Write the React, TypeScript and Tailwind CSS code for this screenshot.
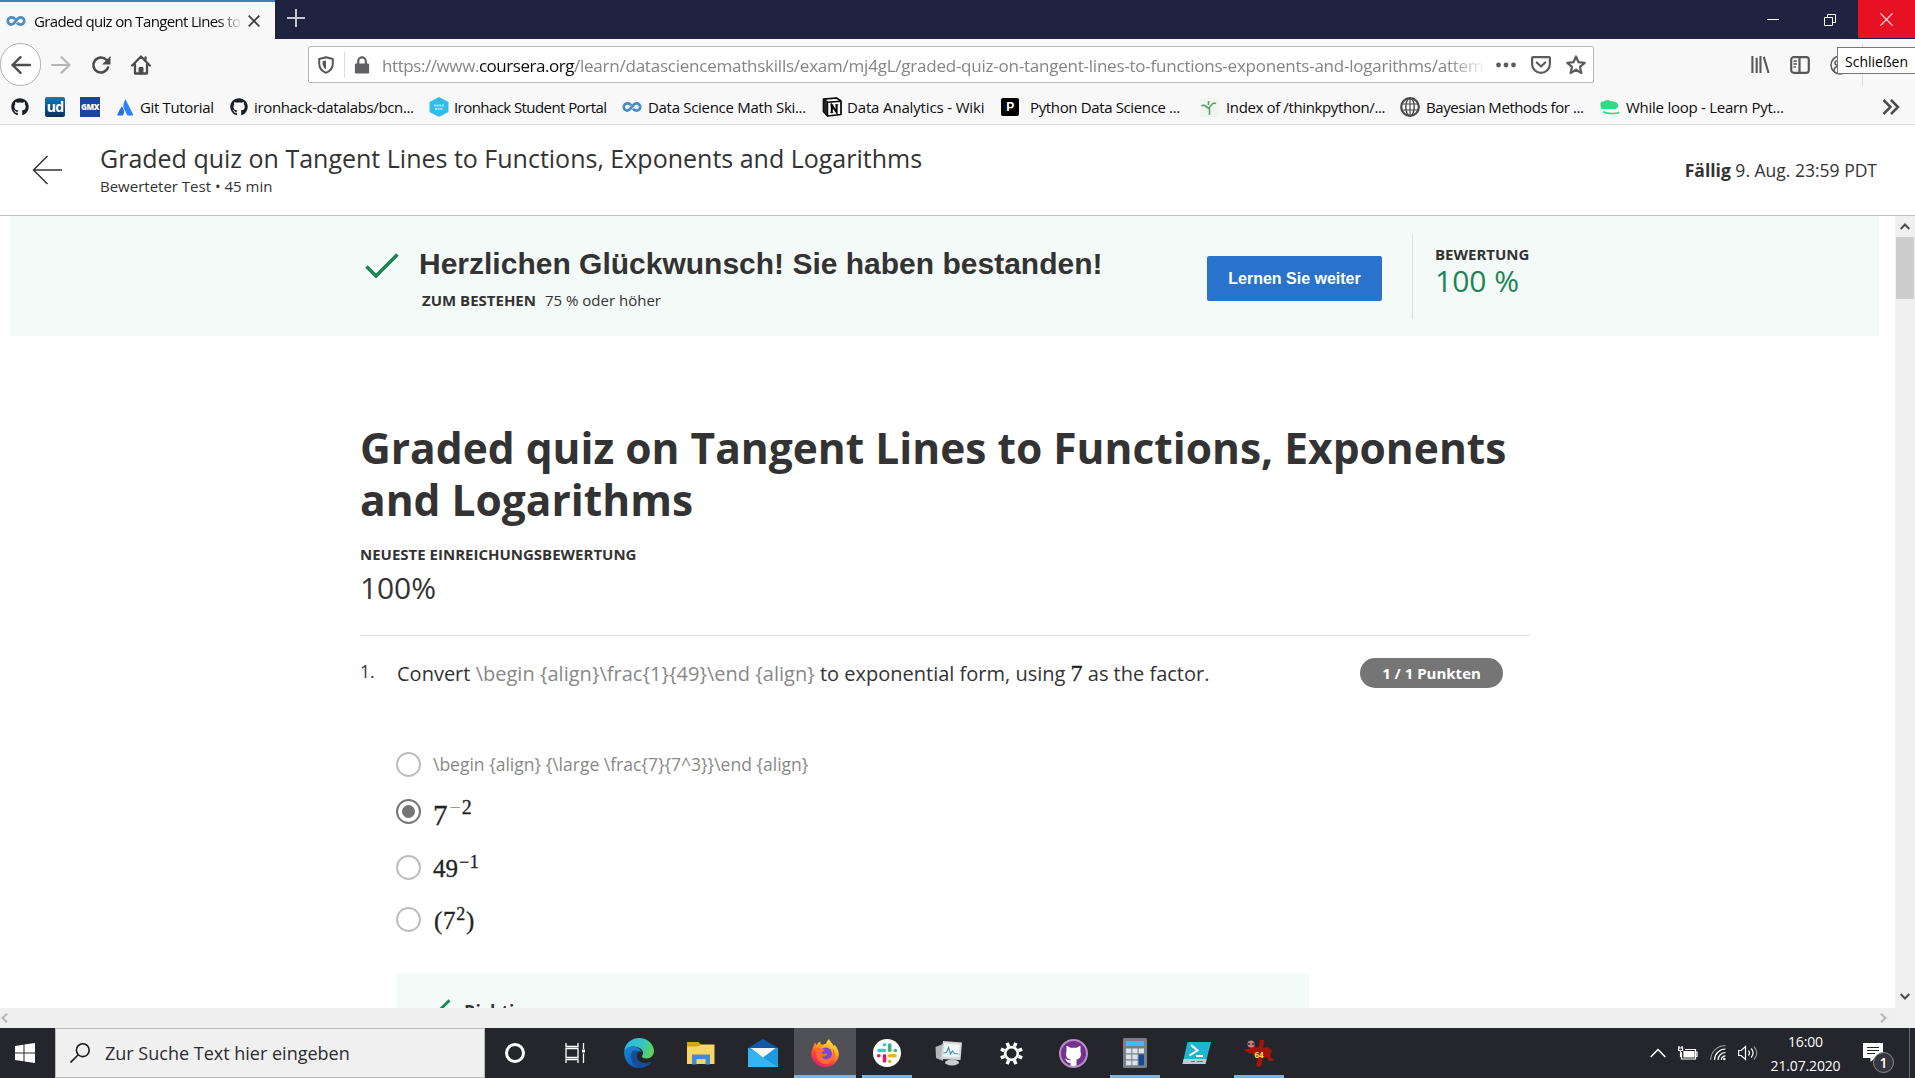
import type { ReactNode } from "react";
import { FaGithub } from "react-icons/fa";

const ui = "font-['Open_Sans','Noto_Sans',sans-serif]";

/* ---------- browser chrome icons ---------- */

function Coursera({ className = "h-[10px] w-[20px]" }: { className?: string }) {
  return (
    <svg viewBox="0 0 20 10" className={className} fill="none" stroke="#4a8bc4" strokeWidth="2.7">
      <path d="M9.200 3.200C8.200 1.800 7 1.400 5.400 1.400a3.600 3.600 0 1 0 0 7.200C9.600 8.600 10 1.400 14.600 1.400a3.600 3.600 0 1 1 0 7.200c-1.600 0-2.800-.6-3.600-1.800" />
    </svg>
  );
}

function Atlassian() {
  return (
    <svg viewBox="0 0 18 18" className="h-[17px] w-[17px]">
      <path d="M5 8C3.5 10 1.5 14 .3 16.8c-.2.5 0 .8.5.8H6c2.500-2.500 1.600-7-1-9.600z" fill="#2b6fe0" />
      <path d="M8.500 1C6.500 4.500 6.200 8 8 11.500l2.800 5.700c.2.300.4.400.7.400h5.200c.5 0 .7-.4.500-.8L9.400 1c-.2-.5-.6-.5-.9 0z" fill="#2684ff" />
    </svg>
  );
}

function Notion() {
  return (
    <svg viewBox="0 0 20 20" className="h-[20px] w-[20px]">
      <path d="M1.500 2.200 14.500 1 19 4v13.500L5.500 19 1.500 14.500z" fill="#fff" stroke="#000" strokeWidth="1.700" strokeLinejoin="round" />
      <path d="M1.500 2.200 5.500 5.200 19 4.200M5.500 5.200V19" fill="none" stroke="#000" strokeWidth="1.500" />
      <path d="M1.500 3 5.500 6v12.500l-4-4.500z" fill="#222" />
      <path d="M9.800 15.500V8.300l4.800 7V7.800" fill="none" stroke="#000" strokeWidth="2" />
      <path d="M8.300 8h3M13.200 7.800h3M8.300 15.700h3" stroke="#000" strokeWidth="1" />
    </svg>
  );
}

function BookmarkGlobe() {
  return (
    <svg viewBox="0 0 20 20" className="h-[20px] w-[20px]" fill="none" stroke="#4a4a4c">
      <circle cx="10" cy="10" r="8.800" strokeWidth="2.200" />
      <ellipse cx="10" cy="10" rx="4.200" ry="8.800" strokeWidth="1.400" />
      <path d="M1 7h18M1 13h18M10 1v18" strokeWidth="1.200" />
    </svg>
  );
}

function Plant() {
  return (
    <span className="flex h-[19px] w-[19px] items-center justify-center bg-[#eef6ee]">
      <svg viewBox="0 0 18 18" className="h-[18px] w-[18px]" fill="none" stroke="#5f9f68" strokeWidth="1.600">
        <path d="M9.500 17V9M9.500 11 4 7M9.500 9 13.500 5M8.500 7V3M4 7 1.500 8M13.500 5l2.500.5" />
      </svg>
    </span>
  );
}

function Snake() {
  return (
    <svg viewBox="0 0 21 17" className="h-[17px] w-[21px]">
      <path d="M.5 4C1.500 1.500 4 3 5 1.500 7 .3 9 .3 10.500 1.800 13 2.500 17 2 18.500 4.500c1.500 3-.5 5.500-3 5.500H3C.5 10 .5 8 .5 4z" fill="#2edc86" />
      <path d="M3 13c5 2 12 2.300 17.500.7" stroke="#2edc86" strokeWidth="1.700" fill="none" />
    </svg>
  );
}

function Hexagon() {
  return (
    <svg viewBox="0 0 20 20" className="h-[20px] w-[20px]">
      <path d="M10 0 19.500 5v10L10 20 .5 15V5z" fill="#33bdea" />
      <path d="M5 8.500h10M6 12h8" stroke="#a9e3f7" strokeWidth="1.800" strokeDasharray="2 .6" />
    </svg>
  );
}

function NavButtons() {
  return (
    <div className="flex h-[43px] w-[308px] shrink-0 items-center text-[#4c4c4e]">
      <div className="flex h-[43px] w-[41px] items-center justify-center rounded-full border border-[#b1b1b3] bg-white">
        <svg viewBox="0 0 20 20" className="h-5 w-5" fill="none" stroke="currentColor" strokeWidth="2.400" strokeLinecap="round" strokeLinejoin="round">
          <path d="M19 10H1.500M9.500 2.200 1.500 10l8 7.800" />
        </svg>
      </div>
      <svg viewBox="0 0 20 20" className="ml-[10px] h-5 w-5 text-[#b5b5b7]" fill="none" stroke="currentColor" strokeWidth="2.200" strokeLinecap="round" strokeLinejoin="round">
        <path d="M1 10h17.500M10.500 2.200l8 7.800-8 7.800" />
      </svg>
      <svg viewBox="0 0 20 20" className="ml-[20px] h-5 w-5" fill="none" stroke="currentColor" strokeWidth="2.500">
        <path d="M17 12.500A7.500 7.500 0 1 1 15.500 5" strokeLinecap="round" />
        <path d="M19.500 1v8.500H11z" fill="currentColor" stroke="none" />
      </svg>
      <svg viewBox="0 0 20 20" className="ml-[20px] h-5 w-5" fill="none" stroke="currentColor" strokeWidth="2.300" strokeLinejoin="round" strokeLinecap="round">
        <path d="M1.200 10.500 10 1.500l8.800 9M4 9.500v9h12v-9" />
        <path d="M8 18.500v-6h4v6z" fill="currentColor" strokeWidth="1" />
        <path d="M14.500 4.500v-2" />
      </svg>
    </div>
  );
}

function UrlBar() {
  return (
    <div className="flex h-[37px] w-[1286px] shrink-0 items-center rounded-[2px] border border-[#b8b8ba] bg-white">
      <svg viewBox="0 0 16 18" className="ml-[9px] h-[18px] w-[16px]" fill="none" stroke="#58585a" strokeWidth="2">
        <path d="M8 1.200 14.800 3v4.500c0 4.500-2.500 7.500-6.800 9.300C3.700 15 1.200 12 1.200 7.500V3z" strokeLinejoin="round" />
        <path d="M8 4.500v9C5.800 12 4.500 10 4.500 7V5.300z" fill="#58585a" stroke="none" />
      </svg>
      <div className="ml-[10px] h-[26px] w-px bg-[#dcdcde]" />
      <svg viewBox="0 0 16 19" className="ml-[9px] h-[18px] w-[16px]">
        <path d="M4 9V5.500a4 4 0 0 1 8 0V9" fill="none" stroke="#606062" strokeWidth="2.300" />
        <rect x=".5" y="8" width="15" height="10.500" rx="1.300" fill="#606062" />
      </svg>
      <div className="ml-[12px] flex w-[1105px] overflow-hidden pt-[2px] text-[17px] leading-6 whitespace-nowrap text-[#858587] [mask-image:linear-gradient(to_right,black_96.5%,transparent)]">
        <span className="tracking-[-0.42px]">https://www.</span>
        <span className="tracking-[-0.47px] text-[#0c0c0d]">coursera.org</span>
        <span className="tracking-[-0.23px]">/learn/datasciencemathskills/exam/mj4gL/graded-quiz-on-tangent-lines-to-functions-exponents-and-logarithms/attem</span>
      </div>
      <svg viewBox="0 0 22 6" className="ml-[8px] h-[6px] w-[22px]" fill="#5c5c5e">
        <circle cx="3.500" cy="3" r="2.400" /><circle cx="11" cy="3" r="2.400" /><circle cx="18.500" cy="3" r="2.400" />
      </svg>
      <svg viewBox="0 0 20 18" className="ml-[14px] h-[18px] w-[20px]" fill="none" stroke="#5c5c5e" strokeWidth="2.200" strokeLinejoin="round" strokeLinecap="round">
        <path d="M2 1.200h16c.6 0 .9.3.9.900V8A8.900 8.900 0 0 1 1.100 8V2.100c0-.6.3-.9.9-.9zM5.800 6.500 10 10.500l4.200-4" />
      </svg>
      <svg viewBox="0 0 20 20" className="ml-[15px] h-[20px] w-[20px]" fill="none" stroke="#5c5c5e" strokeWidth="2.200" strokeLinejoin="round">
        <path d="m10 1.500 2.500 5.700 6.200.6-4.700 4.100 1.400 6.100L10 14.800 4.600 18 6 11.900 1.300 7.800l6.200-.6z" />
      </svg>
    </div>
  );
}

function Bookmark({ icon, label, className }: { icon: ReactNode; label?: string; className: string }) {
  return (
    <div className={"flex shrink-0 items-center " + className}>
      <span className="flex w-[20px] shrink-0 justify-center">{icon}</span>
      {label && <span className="ml-[5px] whitespace-nowrap">{label}</span>}
    </div>
  );
}

function Chrome() {
  return (
    <div className={"relative shrink-0 " + ui}>
      <div className="flex h-[39px] bg-[#202340]">
        <div className="flex w-[275px] items-center border-t-2 border-[#3f82c4] bg-[#f8f8f9] pl-[6px]">
          <Coursera />
          <div className="ml-[8px] w-[209px] overflow-hidden text-[15px] leading-5 tracking-[-0.66px] whitespace-nowrap text-[#0c0c0d] [mask-image:linear-gradient(to_right,black_88%,transparent_100%)]">
            Graded quiz on Tangent Lines to
          </div>
          <svg viewBox="0 0 12 12" className="ml-[5px] h-[12px] w-[12px]" stroke="#3a3a3c" strokeWidth="1.700"><path d="M.7.7l10.600 10.600M11.300.7.7 11.300" /></svg>
        </div>
        <svg viewBox="0 0 18 18" className="mt-[9px] ml-[12px] h-[18px] w-[18px]" stroke="#c6c6ce" strokeWidth="2"><path d="M9 0v18M0 9h18" /></svg>
        <div className="ml-auto flex items-center">
          <svg viewBox="0 0 12 12" className="mr-[45px] h-3 w-3" stroke="#fff"><path d="M0 5.500h12" /></svg>
          <svg viewBox="0 0 12 12" className="mr-[22px] h-3 w-3" fill="none" stroke="#fff"><path d="M.5 3.500h8v8h-8zM3.500 3.500v-3h8v8h-3" /></svg>
          <div className="flex h-[38px] w-[57px] items-center justify-center self-start bg-[#e81123]">
            <svg viewBox="0 0 14 14" className="h-[13px] w-[13px]" stroke="#fff" strokeWidth="1.200"><path d="M.5.5l13 13M13.500.5l-13 13" /></svg>
          </div>
        </div>
      </div>
      <div className="h-[86px] border-b border-[#d7d7da] bg-[#f8f8f9]">
        <div className="flex h-[51px] items-center">
          <NavButtons />
          <UrlBar />
          <svg viewBox="0 0 20 20" className="ml-[156px] h-[19px] w-[20px]" stroke="#58585a" strokeWidth="2.200"><path d="M2 1v18M6.500 3v16M10.500 1v18M14 2l5 17" /></svg>
          <svg viewBox="0 0 20 18" className="ml-[20px] h-[18px] w-[20px]" fill="none" stroke="#58585a" strokeWidth="2.200">
            <rect x="1.200" y="1.200" width="17.600" height="15.600" rx="2.500" /><path d="M9.500 1v16" /><path d="M3.500 5H7M3.500 8H7M3.500 11H6" strokeWidth="1.300" />
          </svg>
          <svg viewBox="0 0 20 20" className="ml-[20px] h-[20px] w-[20px]" fill="none" stroke="#58585a" strokeWidth="1.500"><circle cx="10" cy="10" r="9" /><circle cx="7" cy="8" r="2" /><path d="M4 16c0-5 6-6 8-3" /></svg>
          <div className="ml-[12px] h-[42px] w-px bg-[#dddde0]" />
        </div>
        <div className="flex h-[34px] items-center pl-[10px] text-[15px] leading-5 text-[#0c0c0d]">
          <Bookmark className="w-[35px]" icon={<FaGithub className="h-[18px] w-[18px] text-[#1b1f23]" />} />
          <Bookmark className="w-[35px]" icon={<span className="flex h-5 w-5 items-center justify-center rounded-[2px] bg-linear-to-b from-[#157ab5] to-[#0b3057] pb-px text-[14px] font-bold tracking-tighter text-white">ud</span>} />
          <Bookmark className="w-[35px]" icon={<span className="flex h-5 w-5 items-center justify-center bg-[#1c449b] text-[8px] font-extrabold tracking-[-0.4px] text-white">GMX</span>} />
          <Bookmark className="w-[114px] tracking-[-0.34px]" icon={<Atlassian />} label="Git Tutorial" />
          <Bookmark className="w-[200px] tracking-[-0.35px]" icon={<FaGithub className="h-[18px] w-[18px] text-[#1b1f23]" />} label="ironhack-datalabs/bcn..." />
          <Bookmark className="w-[193px] tracking-[-0.57px]" icon={<Hexagon />} label="Ironhack Student Portal" />
          <Bookmark className="w-[200px] tracking-[-0.3px] [&>span+span]:ml-[6px]" icon={<Coursera />} label="Data Science Math Ski..." />
          <Bookmark className="w-[178px] tracking-[-0.15px]" icon={<Notion />} label="Data Analytics - Wiki" />
          <Bookmark className="w-[199px] tracking-[-0.36px] [&>span+span]:ml-[10px]" icon={<span className="flex h-[18px] w-[18px] items-center justify-center rounded-[2px] bg-black font-['Liberation_Sans',sans-serif] text-[12px] font-bold text-white">P</span>} label="Python Data Science ..." />
          <Bookmark className="w-[201px] tracking-[-0.37px] [&>span+span]:ml-[7px]" icon={<Plant />} label="Index of /thinkpython/..." />
          <Bookmark className="w-[200px] tracking-[-0.44px] [&>span+span]:ml-[6px]" icon={<BookmarkGlobe />} label="Bayesian Methods for ..." />
          <Bookmark className="w-[190px] tracking-[-0.26px] [&>span+span]:ml-[6px]" icon={<Snake />} label="While loop - Learn Pyt..." />
          <svg viewBox="0 0 18 16" className="ml-auto mr-[15px] h-[16px] w-[18px]" fill="none" stroke="#4c4c4e" strokeWidth="2.500"><path d="m1.500 1 7 7-7 7M9 1l7 7-7 7" /></svg>
        </div>
      </div>
      <div className="absolute top-[47px] right-0 flex h-[27px] w-[78px] items-center border border-r-0 border-[#767676] bg-white pt-[2px] pl-[7px] text-[14px] leading-5 whitespace-nowrap text-black">
        Schließen
      </div>
    </div>
  );
}

/* ---------- course page ---------- */

function CourseHeader() {
  return (
    <header className="flex h-[91px] shrink-0 items-center border-b border-[#bdbdbd] bg-white pr-[38px] pl-[32px] text-[#333]">
      <svg viewBox="0 0 30 30" className="h-[30px] w-[30px]" fill="none" stroke="#333" strokeWidth="1.500"><path d="M30 15H1.500M15.500 1 1.500 15l14 14" /></svg>
      <div className="ml-[38px] pb-[2px]">
        <div className="text-[25px] leading-[30px]">Graded quiz on Tangent Lines to Functions, Exponents and Logarithms</div>
        <div className="mt-[3px] text-[15px] leading-[20px]">Bewerteter Test • 45 min</div>
      </div>
      <div className="ml-auto text-[17.5px] leading-6"><b>Fällig</b> 9. Aug. 23:59 PDT</div>
    </header>
  );
}

function Tick({ className }: { className: string }) {
  return (
    <svg viewBox="0 0 34 26" className={className} fill="none" stroke="#1f8354" strokeWidth="3.600"><path d="M1.500 13.500 11 23 32.500 1.500" /></svg>
  );
}

function Banner() {
  return (
    <section className="mr-[16px] ml-[10px] flex h-[120px] shrink-0 bg-[#f3faf8] text-[#333]">
      <Tick className="mt-[37px] ml-[355px] h-[26px] w-[34px]" />
      <div className="ml-[20px] w-[788px] pt-[29px]">
        <div className="font-['Liberation_Sans',Arial,sans-serif] text-[30px] leading-[37px] font-bold">Herzlichen Glückwunsch! Sie haben bestanden!</div>
        <div className="mt-[8px] ml-[3px] text-[15px] leading-5"><span className="mr-[9px] font-bold">ZUM BESTEHEN</span>75 % oder höher</div>
      </div>
      <button className="mt-[40px] h-[45px] w-[175px] rounded-[2px] bg-[#2a73cc] font-['Liberation_Sans',Arial,sans-serif] text-[16px] font-bold text-white">Lernen Sie weiter</button>
      <div className="mt-[18px] ml-[30px] h-[85px] w-px bg-[#dcdfde]" />
      <div className="ml-[22px] pt-[28px]">
        <div className="text-[15px] leading-[20px] font-bold">BEWERTUNG</div>
        <div className="text-[30px] leading-[34px] text-[#1f8354]">100 %</div>
      </div>
    </section>
  );
}

function Radio({ checked }: { checked?: boolean }) {
  return (
    <span className={"flex h-[25px] w-[25px] shrink-0 items-center justify-center rounded-full border-2 " + (checked ? "border-[#757575]" : "border-[#bdbdbd]")}>
      {checked && <span className="h-[13px] w-[13px] rounded-full bg-[#757575]" />}
    </span>
  );
}

const math = "font-['Liberation_Serif','Times_New_Roman',serif] text-[#222] [-webkit-text-stroke:0.3px_#222]";

function Quiz() {
  return (
    <main className="ml-[360px] flex min-h-0 w-[1170px] grow flex-col overflow-hidden pt-[86px] text-[#333]">
      <h1 className="text-[42.5px] leading-[52px] font-bold">Graded quiz on Tangent Lines to Functions, Exponents and Logarithms</h1>
      <div className="mt-[15px] text-[15px] leading-[26px] font-bold">NEUESTE EINREICHUNGSBEWERTUNG</div>
      <div className="mt-px text-[30px] leading-[40px] tracking-[-0.1px]">100%</div>
      <div className="mt-[27px] h-px shrink-0 bg-[#dcdcdc]" />
      <div className="flex h-[93px] shrink-0 pt-[21px]">
        <div className="w-[37px] text-[17.5px] leading-[28px]">1.</div>
        <div className="pt-[1px] text-[20px] leading-[30px] whitespace-nowrap">
          Convert <span className="tracking-[0.02px] text-[#888]">\begin {"{align}"}\frac{"{1}{49}"}\end {"{align}"}</span> to exponential form, using <span className={math + " text-[24px]"}>7</span> as the factor.
        </div>
        <div className="mt-px mr-[27px] ml-auto flex h-[30px] w-[143px] items-center justify-center rounded-full bg-[#757575] text-[15px] font-bold text-white">1 / 1 Punkten</div>
      </div>
      <div className="flex h-[245px] shrink-0 flex-col pt-[23px] pl-[36px]">
        <div className="flex h-[25px] items-center"><Radio /><span className="ml-[12px] pb-px text-[17.5px] leading-6 whitespace-nowrap text-[#888]">\begin {"{align}"} {"{\\large"} \frac{"{7}{7^3}}"}\end {"{align}"}</span></div>
        <div className="mt-[22px] flex h-[25px] items-center"><Radio checked /><span className={"mt-[7px] ml-[12px] text-[29px] leading-none " + math}>7<sup className="top-[-11px] ml-[2px] text-[20px] leading-none tracking-[1px]"><span className="text-[#999] [-webkit-text-stroke:0]">−</span>2</sup></span></div>
        <div className="mt-[31px] flex h-[25px] items-center"><Radio /><span className={"mt-[2px] ml-[12px] text-[25px] leading-none " + math}>49<sup className="top-[-9px] ml-px text-[18px] leading-none tracking-[0.7px]">−1</sup></span></div>
        <div className="mt-[27px] flex h-[25px] items-center"><Radio /><span className={"mt-[2px] ml-[13px] text-[25px] leading-none tracking-[0.7px] " + math}>(7<sup className="top-[-9px] text-[18px] leading-none">2</sup>)</span></div>
      </div>
      <div className="ml-[37px] flex min-h-0 w-[912px] grow overflow-hidden bg-[#f3faf8] pt-[25px]">
        <Tick className="ml-[26px] h-[21px] w-[28px] shrink-0" />
        <span className="ml-[13px] text-[17.5px] leading-6 font-bold">Richtig</span>
      </div>
    </main>
  );
}

/* ---------- taskbar ---------- */

function Task({ children, active, running }: { children: ReactNode; active?: boolean; running?: boolean }) {
  return (
    <div className={"relative flex h-[50px] w-[62px] shrink-0 items-center justify-center " + (active ? "bg-[#505156]" : "")}>
      {children}
      {active && <span className="absolute inset-x-0 bottom-0 h-[3px] bg-[#7fb4de]" />}
      {running && <span className="absolute inset-x-[6px] bottom-0 h-[3px] bg-[#7fb4de]" />}
    </div>
  );
}

function Edge() {
  return (
    <svg viewBox="0 0 30 30" className="h-[30px] w-[30px]">
      <defs>
        <linearGradient id="eg" x1="0" y1=".3" x2="1" y2=".6"><stop offset="0" stopColor="#2fb4ea" /><stop offset=".55" stopColor="#35c5c0" /><stop offset="1" stopColor="#63d352" /></linearGradient>
        <linearGradient id="eb" x1="0" y1="0" x2=".6" y2="1"><stop offset="0" stopColor="#1b86d8" /><stop offset="1" stopColor="#0c5bb0" /></linearGradient>
      </defs>
      <path d="M.2 13C1 5.500 7.500 0 15 0c8.500 0 15 6.300 15 13 0 4.500-3.500 7.500-7.500 7.500-3 0-5-1-4.500-2.500 2-2.500 1.500-6.500-3.500-8.500C9.500 7 2.500 9 .2 13z" fill="url(#eg)" />
      <path d="M.2 13C2.500 9 7 8 11 8.800c3.500.7 6 2.700 6.500 5.200-2.500-2-5 0-5.200 3.500-.1 5 5 9 10.700 7.500 1.500-.4 3.500-1 4.500-1.500-2.500 4-7 6.500-12.500 6.500C6.500 30-.8 22.500.2 13z" fill="url(#eb)" />
      <path d="M8 13.500c-3 6 0 13.500 7 16.500 5 0 10-2.500 12.500-6.500-7 3.500-15 1-15.200-6 0-2 .8-3.500 2-4.200-2-1-4.500-1-6.300.2z" fill="#124f96" />
    </svg>
  );
}

function Firefox() {
  return (
    <svg viewBox="0 0 28 28" className="h-[28px] w-[28px]">
      <defs>
        <linearGradient id="ff" x1=".8" y1="0" x2=".25" y2="1"><stop offset="0" stopColor="#fff04a" /><stop offset=".35" stopColor="#ffab24" /><stop offset=".65" stopColor="#ff4a35" /><stop offset="1" stopColor="#e3177c" /></linearGradient>
      </defs>
      <path d="M1.500 10C2 7.500 3 5.500 4.500 3.500 4.700 5 5 5.500 5.500 6 7 3.800 8 3 9.500 2.500 9 4 9.300 5 10 5.500c2 .3 4 .2 5-1C16 3 16 1.500 18 0c1 3 4 4.500 5 7.500.5-.5.5-1 .5-2C26 8.500 28 12 27.800 16 27 23 21 28 14 28 6.500 28 .3 22 .2 14.500.2 12.500.8 11 1.500 10z" fill="url(#ff)" />
      <circle cx="15" cy="14.500" r="6" fill="#7848d8" />
      <path d="M6 10c3-2 5 0 8 .3-.2 1.700-3 2-3.500 4.200 1.500 1 4 .2 6-.5-1 3-3 4-6 3.500C12 20 15 21 18 19.500c4-2 5-6 3-10.500 5 5 4 15-6 16C8 25 3 18 6 10z" fill="#ff6a35" />
    </svg>
  );
}

function Slack() {
  return (
    <svg viewBox="0 0 28 28" className="h-[28px] w-[28px]" strokeLinecap="round" strokeWidth="3.600" fill="none">
      <circle cx="14" cy="14" r="14" fill="#fff" />
      <path d="M11.500 5.700v.1M6 11.500h5.500" stroke="#36c5f0" />
      <path d="M16.700 6v5.500M22.300 11.500h.1" stroke="#2eb67d" />
      <path d="M16.700 16.800H22M16.700 22.300v.1" stroke="#ecb22e" />
      <path d="M11.500 16.800V22M5.800 16.800h.1" stroke="#e01e5a" />
    </svg>
  );
}

function Taskbar() {
  return (
    <footer className={"flex h-[50px] shrink-0 items-center bg-[#25262b] text-white " + ui}>
      <div className="flex w-[55px] justify-center pr-[5px]">
        <svg viewBox="0 0 20 20" className="h-[20px] w-[20px]" fill="#fff"><path d="M0 3 8.500 1.700v7.800H0zM9.500 1.500 20 0v9.500H9.500zM0 10.500h8.500v7.800L0 17zM9.500 10.500H20V20L9.500 18.500z" /></svg>
      </div>
      <div className="flex h-[50px] w-[430px] items-center border border-[#bcbcbe] bg-[#f0f0f0] text-[#2c2c2e]">
        <svg viewBox="0 0 20 20" className="ml-[14px] h-[20px] w-[20px]" fill="none" stroke="#1c1c1e" strokeWidth="1.600"><circle cx="12.800" cy="7.200" r="6.400" /><path d="M8.300 11.700.5 19.500" /></svg>
        <div className="ml-[15px] text-[18px] leading-6 whitespace-nowrap">Zur Suche Text hier eingeben</div>
      </div>
      <div className="flex w-[60px] justify-center"><span className="h-[20px] w-[20px] rounded-full border-3 border-white" /></div>
      <div className="flex w-[63px] justify-center pr-[4px]">
        <svg viewBox="0 0 20 20" className="h-[20px] w-[20px]" fill="none" stroke="#fff" strokeWidth="1.300"><path d="M1 0v3.500h12V0M1 20v-3.500h12V20M1 5.500h12v9H1zM18.500 0v6M18.500 10.500V20" /><path d="M17 6.500h3v3h-3z" fill="#fff" stroke="none" /></svg>
      </div>
      <Task><Edge /></Task>
      <Task>
        <svg viewBox="0 0 28 24" className="h-[24px] w-[28px]"><path d="M0 1h11l2.500 2.500H27.500V23H0z" fill="#fbd565" /><path d="M0 1h11l2.500 2.500L11 5.500H0z" fill="#d9a319" /><path d="M5 23.500V13.500h18v10h-4.500V18h-9v5.500z" fill="#3b8fd0" /></svg>
      </Task>
      <Task>
        <svg viewBox="0 0 30 28" className="h-[28px] w-[30px]"><path d="M0 9 15 0l15 9v3H0z" fill="#0f5aa8" /><path d="M0 9h30v19H0z" fill="#1e9be0" /><path d="M0 9l30 19H0z" fill="#35b5f0" /><path d="M2.500 9h25L15 18.500z" fill="#f3f5f7" /></svg>
      </Task>
      <Task active><Firefox /></Task>
      <Task running><Slack /></Task>
      <Task>
        <svg viewBox="0 0 28 26" className="h-[26px] w-[28px]"><path d="M.5 7 8 4v17l-7-3z" fill="#b4b6b8" /><ellipse cx="17" cy="22.500" rx="7" ry="3" fill="#c9cbcd" /><path d="M8 1l19 1.500-1.500 17.500L6 19z" fill="#d5d7d9" /><path d="M9.500 3.500l15.500 1-1.200 12.500-15.600-.6z" fill="#f4f7f9" /><path d="M8.500 13l3-.5 2-5 2 6.500 2-3 2 2.500 4 .5" fill="none" stroke="#4494b8" strokeWidth="1.200" /></svg>
      </Task>
      <Task>
        <svg viewBox="0 0 24 24" className="h-[23px] w-[23px]" fill="none" stroke="#fff"><circle cx="12" cy="12" r="6.600" strokeWidth="2.800" /><path d="M12 0v4M12 20v4M0 12h4M20 12h4M3.500 3.500l3 3M17.500 17.500l3 3M3.500 20.500l3-3M17.500 6.500l3-3" strokeWidth="3.600" transform="rotate(22.500 12 12)" /></svg>
      </Task>
      <Task>
        <span className="flex h-[29px] w-[29px] items-center justify-center overflow-hidden rounded-full border-2 border-[#b58fc6] bg-[#73328f]">
          <svg viewBox="0 0 25 25" className="h-[25px] w-[25px]" fill="#fff"><path d="M5.500 5.500c0-.8.700-.7 4 1.300h6c3.300-2 4-2.100 4-1.300v5c1.500 5-1 7.500-4 8V25h-6v-3C7 22 6 21 4 17.500c2 .5 3 2.500 5.500 2v-1c-3-.5-5.500-3-4-8z" /></svg>
        </span>
      </Task>
      <Task running>
        <svg viewBox="0 0 24 30" className="h-[30px] w-[24px]"><rect width="24" height="30" rx="1.500" fill="#75808a" /><path d="M3 3h18v5H3z" fill="#36c3ea" /><path d="M3 10.500h5.300v4.800H3zM9.300 10.500h5.300v4.800H9.300zM15.700 10.500H21v4.800h-5.300zM3 16.500h5.300v4.800H3zM9.300 16.500h5.300v4.800H9.300zM3 22.500h5.300v4.800H3zM9.300 22.500h5.300v4.800H9.300z" fill="#dde3e8" /><path d="M15.700 16.500H21v10.800h-5.300z" fill="#174a94" /></svg>
      </Task>
      <Task>
        <svg viewBox="0 0 30 24" className="h-[24px] w-[30px]"><path d="M5.500 1H29l-5.500 22H.5z" fill="#22b2d2" /><path d="M1.600 18h23l-1.200 5H.5z" fill="#b9cdd3" /><path d="M9 4l6.500 5.500L7.500 14.500M14 15h7" fill="none" stroke="#fff" strokeWidth="2" /><path d="M9 20.500h4M15 20.500h6" stroke="#5c7b85" strokeWidth="1.200" /></svg>
      </Task>
      <Task running>
        <span className="relative flex h-[28px] w-[30px] items-center justify-center">
          <svg viewBox="0 0 30 28" className="absolute inset-0 h-[28px] w-[30px]"><path d="M5 3l5 1 2 5 3-1 1-7 4 0-1 8 5-1 4 4-2 4 1 3 3 1-1 2h-4l-2-4-5 2 0 5-2 3-4-1 2-7-5-5-7-2-2-3 6 0z" fill="#a3140f" /><circle cx="7" cy="5" r="3.500" fill="#c98079" /><path d="M4 5h2M8 5h2" stroke="#222" strokeWidth="1.500" /></svg>
          <span className="relative mt-[3px] text-[8px] leading-none font-bold text-[#ffe34f]">64</span>
        </span>
      </Task>
      <div className="ml-auto flex h-[50px] items-center">
        <svg viewBox="0 0 16 10" className="h-[10px] w-[16px]" fill="none" stroke="#fff" strokeWidth="1.500"><path d="m.7 9 7.300-7.500L15.300 9" /></svg>
        <svg viewBox="0 0 20 14" className="ml-[12px] h-[14px] w-[20px]" fill="none" stroke="#fff" strokeWidth="1.200"><path d="M3.500 6v7h14V3.500H7M17.500 6h1.500v4.500h-1.500M2.500 4.500V11M1 0v2M4 0v2M.6 2h4v2.500h-4z" /><path d="M6 5.500h10V11H6z" fill="#fff" /></svg>
        <svg viewBox="0 0 16 16" className="ml-[12px] h-[16px] w-[16px]" fill="none" stroke="#fff" strokeWidth="1.200"><path d="M.7 15C.7 7 7 .7 15.500.7" stroke="#8f9094" /><path d="M4.500 15c0-6 5-11 11-11M8 15c0-4 3.500-7.500 7.500-7.500M11.300 15c0-2.300 2-4.200 4.200-4.200" /><circle cx="14.300" cy="14" r="1.300" fill="#fff" stroke="none" /></svg>
        <svg viewBox="0 0 20 16" className="ml-[12px] h-[16px] w-[20px]" fill="none" stroke="#fff" strokeWidth="1.200"><path d="M.6 5.500h2.500L7.500 1.500v13l-4.400-4H.6zM10.500 5.500c1.200 1.500 1.200 3.500 0 5M13.200 3.500c2.300 2.700 2.300 6.300 0 9" /><path d="M16 1.500c3.500 4 3.500 9 0 13" stroke="#8f9094" /></svg>
        <div className="ml-[12px] w-[71px] pt-px text-center text-[14px] leading-[24px] tracking-[-0.15px] whitespace-nowrap"><div>16:00</div><div>21.07.2020</div></div>
        <div className="relative ml-[22px] h-[50px] w-[31px]">
          <svg viewBox="0 0 20 19" className="absolute top-[15px] left-0 h-[19px] w-[20px]"><path d="M0 0h20v15h-8L7.500 19v-4H0z" fill="#fff" /><path d="M4 4.500h12M4 7.500h12M4 10.500h8" stroke="#25262b" strokeWidth="1.200" /></svg>
          <span className="absolute top-[24px] left-[10px] flex h-[21px] w-[21px] items-center justify-center rounded-full border border-[#8d8e92] bg-[#36373c] text-[14px] leading-none font-semibold">1</span>
        </div>
        <div className="ml-[15px] h-[50px] w-px bg-[#66676b]" />
        <div className="w-[5px]" />
      </div>
    </footer>
  );
}

export default function App() {
  return (
    <div className="flex h-[1078px] w-[1915px] flex-col overflow-hidden bg-white font-['Open_Sans','Noto_Sans',sans-serif]">
      <Chrome />
      <CourseHeader />
      <div className="flex min-h-0 grow">
        <div className="flex min-w-0 grow flex-col">
          <Banner />
          <Quiz />
          <div className="flex h-[20px] shrink-0 items-center justify-between bg-[#efefef] px-[1px] text-[#b4b4b4]">
            <svg viewBox="0 0 7 10" className="h-[10px] w-[7px]" fill="none" stroke="currentColor" strokeWidth="2"><path d="M6 .7 1.500 5 6 9.300" /></svg>
            <svg viewBox="0 0 7 10" className="mr-[7px] h-[10px] w-[7px]" fill="none" stroke="currentColor" strokeWidth="2"><path d="M1 .7 5.500 5 1 9.300" /></svg>
          </div>
        </div>
        <div className="flex w-[20px] shrink-0 flex-col items-center bg-[#f0f0f0] text-[#4c4c4c]">
          <svg viewBox="0 0 10 7" className="mt-[7px] h-[7px] w-[10px]" fill="none" stroke="currentColor" strokeWidth="2"><path d="M.7 6 5 1.500 9.300 6" /></svg>
          <div className="mt-[7px] h-[62px] w-[18px] bg-[#cdcdcd]" />
          <svg viewBox="0 0 10 7" className="mt-auto mb-[28px] h-[7px] w-[10px]" fill="none" stroke="currentColor" strokeWidth="2"><path d="M.7 1 5 5.500 9.300 1" /></svg>
        </div>
      </div>
      <Taskbar />
    </div>
  );
}
